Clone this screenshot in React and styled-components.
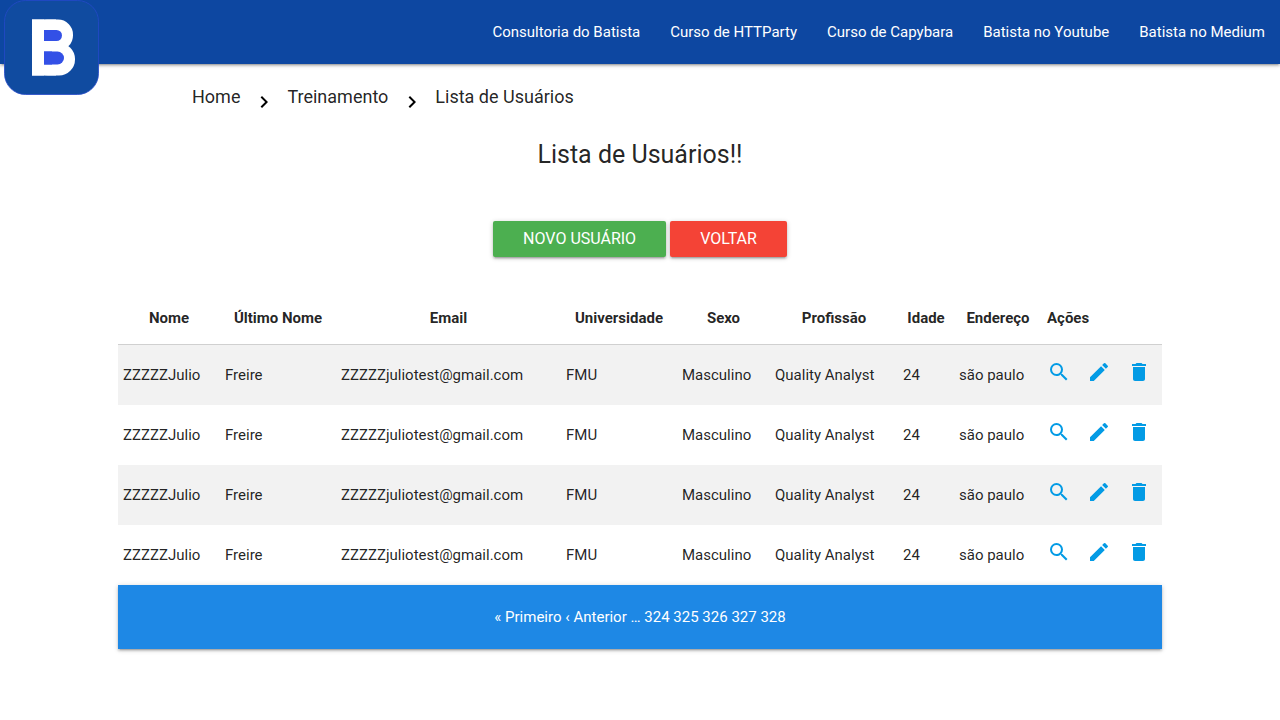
import React from "react";
import styled, { createGlobalStyle } from "styled-components";
import { MdSearch, MdModeEdit, MdDelete, MdChevronRight } from "react-icons/md";

const GlobalStyle = createGlobalStyle`
  *, *::before, *::after { box-sizing: border-box; }
  body {
    margin: 0;
    background: #fff;
    color: rgba(0, 0, 0, 0.87);
    font-family: Roboto, "Liberation Sans", sans-serif;
    font-size: 15px;
    line-height: 20px;
  }
  a { color: inherit; text-decoration: none; }
`;

const raised = "0 2px 2px 0 rgba(0,0,0,.14), 0 3px 1px -2px rgba(0,0,0,.12), 0 1px 5px 0 rgba(0,0,0,.2)";

const Header = styled.header`
  position: relative;
  display: flex;
  justify-content: flex-end;
  height: 64px;
  background: #0d47a1;
  color: #fff;
  box-shadow: ${raised};
`;

const Brand = styled.a`
  position: absolute;
  top: 0;
  left: 4px;
  height: 96px;
`;

const NavLinks = styled.nav`
  display: flex;
  align-items: center;
`;

const NavLink = styled.a`
  padding: 0 15px;
  line-height: 64px;
`;

const Main = styled.main`
  padding-bottom: 40px;
`;

const Breadcrumb = styled.nav`
  display: flex;
  align-items: center;
  width: 70%;
  height: 66px;
  margin: 0 auto;
  font-size: 18px;
  line-height: 24px;
`;

const Chevron = styled(MdChevronRight)`
  width: 24px;
  height: 24px;
  margin: 10px 11px 0 12px;
  color: #000;
`;

const Title = styled.h5`
  margin: 8px 0 0;
  font-size: 25px;
  line-height: 34px;
  font-weight: 400;
  text-align: center;
`;

const Actions = styled.div`
  display: flex;
  justify-content: center;
  gap: 4px;
  margin-top: 49px;
`;

const Button = styled.button`
  height: 36px;
  padding: 0 30px;
  border: 0;
  border-radius: 2px;
  background: ${(p) => p.$color};
  color: #fff;
  font: 400 16px/36px Roboto, "Liberation Sans", sans-serif;
  text-transform: uppercase;
  box-shadow: ${raised};
  cursor: pointer;
`;

const Listing = styled.section`
  max-width: 1044px;
  margin: 34px auto 0;
`;

const Table = styled.table`
  width: 100%;
  table-layout: fixed;
  border-spacing: 0;
`;

const Col = styled.col`
  width: ${(p) => p.$w}px;
`;

const Th = styled.th`
  height: 54px;
  padding: 0 5px;
  border-bottom: 1px solid #d0d0d0;
  font-weight: 700;
  text-align: ${(p) => p.$align || "center"};
`;

const Row = styled.tr`
  height: 60px;
  &:nth-child(odd) { background: #f2f2f2; }
`;

const Td = styled.td`
  padding: 0 5px;
  white-space: nowrap;
`;

const IconLinks = styled.div`
  display: flex;
  gap: 16px;
  padding-bottom: 6px;
  color: #039be5;
  a { display: flex; }
  svg { width: 24px; height: 24px; }
`;

const Pager = styled.nav`
  position: relative;
  background: #1e88e5;
  color: #fff;
  line-height: 64px;
  text-align: center;
  box-shadow: ${raised};
`;

const columns = [
  ["Nome", 102],
  ["Último Nome", 116],
  ["Email", 225],
  ["Universidade", 116],
  ["Sexo", 93],
  ["Profissão", 128],
  ["Idade", 56],
  ["Endereço", 88],
  ["Ações", 120],
];

const user = ["ZZZZZJulio", "Freire", "ZZZZZjuliotest@gmail.com", "FMU", "Masculino", "Quality Analyst", "24", "são paulo"];
const users = [user, user, user, user];

const links = ["Consultoria do Batista", "Curso de HTTParty", "Curso de Capybara", "Batista no Youtube", "Batista no Medium"];
const pages = ["324", "325", "326", "327", "328"];

function Logo() {
  return (
    <svg width="95" height="96" viewBox="0 0 95 96" aria-hidden="true">
      <rect x="0.5" y="0.5" width="94" height="94" rx="21" fill="#104ba0" stroke="#2549c9" strokeWidth="0.8" />
      <rect x="28" y="19.5" width="41" height="31" rx="15" fill="#fff" />
      <rect x="28" y="43" width="43" height="32.5" rx="16" fill="#fff" />
      <rect x="28" y="19.5" width="24" height="56" fill="#fff" />
      <rect x="34" y="30" width="24" height="11" rx="5.5" fill="#3350e6" />
      <rect x="34" y="51.5" width="26" height="13" rx="6.5" fill="#3350e6" />
      <rect x="28" y="19.5" width="12" height="56" fill="#fff" />
      <rect x="40" y="30" width="8" height="11" fill="#3350e6" />
      <rect x="40" y="51.5" width="8" height="13" fill="#3350e6" />
    </svg>
  );
}

export default function App() {
  return (
    <>
      <GlobalStyle />
      <Header>
        <Brand href="#" aria-label="Batista"><Logo /></Brand>
        <NavLinks>
          {links.map((l) => <NavLink href="#" key={l}>{l}</NavLink>)}
        </NavLinks>
      </Header>
      <Main>
        <Breadcrumb>
          <a href="#">Home</a>
          <Chevron />
          <a href="#">Treinamento</a>
          <Chevron />
          <a href="#">Lista de Usuários</a>
        </Breadcrumb>
        <Title>Lista de Usuários!!</Title>
        <Actions>
          <Button $color="#4caf50">Novo Usuário</Button>
          <Button $color="#f44336">Voltar</Button>
        </Actions>
        <Listing>
          <Table>
            <colgroup>
              {columns.map(([name, w]) => <Col key={name} $w={w} />)}
            </colgroup>
            <thead>
              <tr>
                {columns.map(([name]) => (
                  <Th key={name} $align={name === "Ações" ? "left" : "center"}>{name}</Th>
                ))}
              </tr>
            </thead>
            <tbody>
              {users.map((u, i) => (
                <Row key={i}>
                  {u.map((value, j) => <Td key={j}>{value}</Td>)}
                  <Td>
                    <IconLinks>
                      <a href="#" aria-label="Ver"><MdSearch /></a>
                      <a href="#" aria-label="Editar"><MdModeEdit /></a>
                      <a href="#" aria-label="Excluir"><MdDelete /></a>
                    </IconLinks>
                  </Td>
                </Row>
              ))}
            </tbody>
          </Table>
          <Pager>
            <a href="#">« Primeiro</a>{" "}
            <a href="#">‹ Anterior</a>{" "}
            <span>…</span>
            {pages.map((p) => (
              <React.Fragment key={p}> <a href="#">{p}</a></React.Fragment>
            ))}
          </Pager>
        </Listing>
      </Main>
    </>
  );
}
